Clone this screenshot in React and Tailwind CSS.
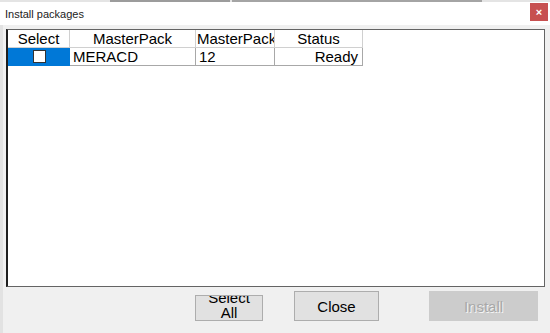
import React from 'react';

const sans = { fontFamily: '"Liberation Sans", Arial, sans-serif' };

function HeaderCell({ w, children, clip }) {
  return (
    <div
      className={`${w} h-[18px] shrink-0 border-r border-b border-[#d0d0d0] bg-white flex items-center ${clip ? 'justify-start pl-[1px]' : 'justify-center'} overflow-hidden whitespace-nowrap text-[15px] leading-none text-black`}
    >
      {children}
    </div>
  );
}

function DataCell({ w, children, align = 'left' }) {
  return (
    <div
      className={`${w} h-[18px] shrink-0 border-r border-b border-[#a8a8a8] bg-white flex items-center ${align === 'right' ? 'justify-end pr-[4px]' : 'justify-start pl-[3px]'} overflow-hidden whitespace-nowrap text-[15px] leading-none text-black`}
    >
      {children}
    </div>
  );
}

export default function App() {
  return (
    <div className="w-[550px] h-[333px] bg-[#f0f0f0] flex flex-col overflow-hidden" style={sans}>
      {/* strip of window behind */}
      <div className="h-[2px] flex bg-[#e4e4e4]">
        <div className="w-[110px]" />
        <div className="w-[120px] bg-[#9c9c9c]" />
        <div className="w-[2px] bg-[#e4e4e4]" />
        <div className="w-[250px] bg-[#a4a4a4]" />
      </div>

      {/* title bar */}
      <div className="h-[23px] bg-white flex items-start justify-between">
        <div className="pl-[5px] pt-[5px] text-[11px] leading-[14px] text-[#222]">Install packages</div>
        <button className="mt-[1px] mr-[2px] w-[18px] h-[18px] bg-[#c75050] flex items-center justify-center text-white text-[11px] font-bold leading-none">
          ×
        </button>
      </div>

      {/* body */}
      <div className="flex-1 flex flex-col border-l-[3px] border-[#e2e2e2]">
        <div className="ml-[3px] mr-[5px] mt-[4px] h-[258px] bg-white border border-[#646464] border-l-2 border-l-[#1e1e1e] flex flex-col">
          <div className="flex">
            <HeaderCell w="w-[62px]">Select</HeaderCell>
            <HeaderCell w="w-[126px]">MasterPack</HeaderCell>
            <HeaderCell w="w-[79px]" clip>MasterPack</HeaderCell>
            <HeaderCell w="w-[88px]">Status</HeaderCell>
          </div>
          <div className="flex">
            <div className="w-[62px] h-[18px] shrink-0 bg-[#0078d7] border-b border-[#0078d7] flex items-center justify-center">
              <div className="w-[13px] h-[13px] bg-white border border-[#333]" />
            </div>
            <DataCell w="w-[126px]">MERACD</DataCell>
            <DataCell w="w-[79px]">12</DataCell>
            <DataCell w="w-[88px]" align="right">Ready</DataCell>
          </div>
        </div>

        {/* buttons */}
        <div className="mt-[4px] flex items-end">
          <div className="w-[192px]" />
          <button className="w-[68px] h-[26px] bg-[#e1e1e1] border border-[#adadad] overflow-hidden flex flex-col items-center justify-start text-[15px] leading-[15px] text-black">
            <span className="-mt-[6px] block text-center">
              Select
              <br />
              All
            </span>
          </button>
          <div className="w-[31px]" />
          <button className="w-[85px] h-[30px] bg-[#e1e1e1] border border-[#adadad] flex items-center justify-center text-[15px] leading-none text-black">
            Close
          </button>
          <div className="w-[50px]" />
          <button className="w-[109px] h-[30px] bg-[#cccccc] border border-[#cccccc] flex items-center justify-center text-[15px] leading-none text-[#a8a8a8] [text-shadow:1px_1px_0_#f4f4f4]">
            Install
          </button>
        </div>
      </div>
    </div>
  );
}
